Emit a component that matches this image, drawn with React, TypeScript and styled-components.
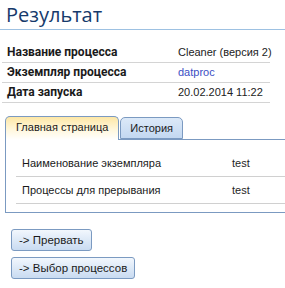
import React from 'react';
import styled, { createGlobalStyle } from 'styled-components';

const GlobalStyle = createGlobalStyle`
  html, body {
    margin: 0;
    padding: 0;
    background: #ffffff;
    overflow: hidden;
  }
  body {
    font-family: "Liberation Sans", Arial, sans-serif;
    font-size: 11px;
    color: #1e1e1e;
  }
`;

interface InfoRow {
  label: string;
  value: string;
  link?: boolean;
}

const info: InfoRow[] = [
  { label: 'Название процесса', value: 'Cleaner (версия 2)' },
  { label: 'Экземпляр процесса', value: 'datproc', link: true },
  { label: 'Дата запуска', value: '20.02.2014 11:22' },
];

const details = [
  { name: 'Наименование экземпляра', value: 'test' },
  { name: 'Процессы для прерывания', value: 'test' },
];

const App: React.FC = () => {
  return (
    <Page>
      <GlobalStyle />
      <Title>Результат</Title>
      <InfoTable>
        {info.map((row) => (
          <InfoLine key={row.label}>
            <Label>{row.label}</Label>
            <Value $link={row.link}>{row.value}</Value>
          </InfoLine>
        ))}
      </InfoTable>
      <Tabs>
        <TabStrip>
          <Tab $active>Главная страница</Tab>
          <Tab>История</Tab>
        </TabStrip>
        <Panel>
          {details.map((d) => (
            <DetailLine key={d.name}>
              <DetailName>{d.name}</DetailName>
              <span>{d.value}</span>
            </DetailLine>
          ))}
        </Panel>
      </Tabs>
      <Buttons>
        <Button>-&gt; Прервать</Button>
        <Button>-&gt; Выбор процессов</Button>
      </Buttons>
    </Page>
  );
};

export default App;

const Page = styled.div`
  width: 285px;
  height: 288px;
  overflow: hidden;
`;

const Title = styled.div`
  font-family: "Open Sans", "Liberation Sans", sans-serif;
  font-size: 20px;
  color: #163a6b;
  height: 30px;
  line-height: 30px;
  padding-left: 6px;
  border-bottom: 1px solid #9dc1e2;
  box-sizing: border-box;
`;

const InfoTable = styled.div`
  margin: 13px 15px 0 2px;
`;

const InfoLine = styled.div`
  display: grid;
  grid-template-columns: 171px 1fr;
  height: 20px;
  line-height: 19px;
  border-bottom: 1px solid #d4d4d4;
  padding-left: 5px;
  box-sizing: border-box;
  white-space: nowrap;
`;

const Label = styled.span`
  font-family: Roboto, "Liberation Sans", sans-serif;
  font-size: 12px;
  font-weight: bold;
  color: #1a1a1a;
`;

const Value = styled.span<{ $link?: boolean }>`
  color: ${(p) => (p.$link ? '#3c4fc4' : '#222222')};
`;

const Tabs = styled.div`
  margin: 13px 0 0 5px;
  width: 300px;
`;

const TabStrip = styled.div`
  display: flex;
  height: 23px;
  align-items: flex-end;
`;

const Tab = styled.div<{ $active?: boolean }>`
  height: ${(p) => (p.$active ? '24px' : '22px')};
  margin-bottom: ${(p) => (p.$active ? '-1px' : '0')};
  box-sizing: border-box;
  padding: 0 ${(p) => (p.$active ? '10px' : '9px')};
  line-height: 21px;
  border: 1px solid #7b9ac1;
  border-bottom: ${(p) => (p.$active ? 'none' : '1px solid #7b9ac1')};
  border-radius: 5px 5px 0 0;
  margin-right: 1px;
  color: #1a1a1a;
  background: ${(p) =>
    p.$active
      ? 'linear-gradient(#fde7a6 0%, #fff7dc 55%, #ffffff 100%)'
      : 'linear-gradient(#dce9f8 0%, #c3d8f1 100%)'};
  position: relative;
  z-index: ${(p) => (p.$active ? 1 : 0)};
`;

const Panel = styled.div`
  border: 1px solid #7b9ac1;
  padding: 10px 0 8px 10px;
`;

const DetailLine = styled.div`
  display: grid;
  grid-template-columns: 210px 1fr;
  height: 27px;
  line-height: 26px;
  border-bottom: 1px solid #d0d0d0;
  padding-left: 6px;
  box-sizing: border-box;
`;

const DetailName = styled.span`
  color: #1a1a1a;
`;

const Buttons = styled.div`
  display: flex;
  flex-direction: column;
  align-items: flex-start;
  gap: 6px;
  margin: 16px 0 0 11px;
`;

const Button = styled.button`
  font-family: "Liberation Sans", Arial, sans-serif;
  font-size: 11.5px;
  color: #1a1a1a;
  height: 22px;
  padding: 0 7px;
  border: 1px solid #7b9ac1;
  border-radius: 3px;
  background: linear-gradient(#f2f7fd 0%, #dde9f7 50%, #c9dbf1 100%);
  cursor: pointer;
`;
